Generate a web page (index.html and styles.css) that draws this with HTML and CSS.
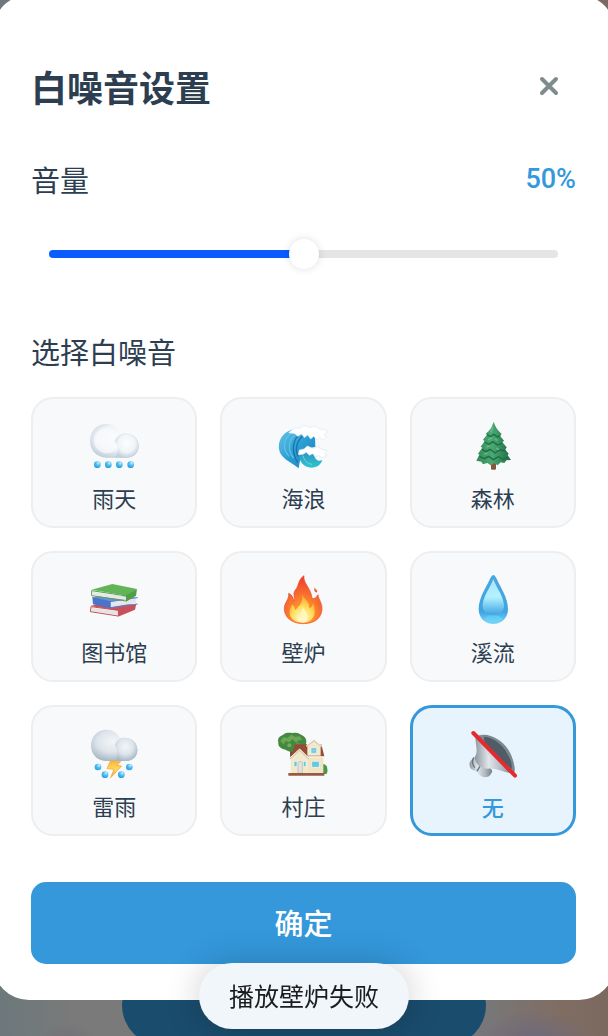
FILE: index.html
```html
<!DOCTYPE html>
<html lang="zh-CN">

<head>
    <meta charset="UTF-8">
    <meta name="viewport" content="width=device-width, initial-scale=1.0">
    <title>白噪音设置</title>
    <link rel="stylesheet" href="styles.css">
</head>

<body>
    <main class="dialog">
        <header class="dialog-header">
            <h1>白噪音设置</h1>
            <button class="close-btn" type="button" aria-label="关闭">
                <svg viewBox="0 0 20 20" fill="none" stroke="currentColor" stroke-width="4" stroke-linecap="round">
                    <path d="M3 3L17 17M17 3L3 17" />
                </svg>
            </button>
        </header>

        <div class="volume-header">
            <label for="volume">音量</label>
            <output class="volume-value" for="volume">50%</output>
        </div>
        <div class="volume-slider">
            <input type="range" id="volume" min="0" max="100" value="50">
        </div>

        <h2>选择白噪音</h2>
        <div class="noise-grid">
            <button class="noise-item" type="button">
                <svg viewBox="27 21 150 150">
                    <defs>
                        <radialGradient id="cloud" cx=".5" cy=".42" r=".58">
                            <stop offset="0" stop-color="#fcfdfe" />
                            <stop offset=".6" stop-color="#f1f5f8" />
                            <stop offset="1" stop-color="#c3d1de" />
                        </radialGradient>
                        <radialGradient id="bead" cx=".65" cy=".25" r=".75">
                            <stop offset="0" stop-color="#c6f1fc" />
                            <stop offset=".5" stop-color="#4fbdf0" />
                            <stop offset="1" stop-color="#2a9fe0" />
                        </radialGradient>
                    </defs>
                    <path fill="url(#cloud)" d="M78 131C51 131 30 109 30 81C30 52 51 30 78 30C99 30 116 41 123 59C151 51 176 69 176 96C176 117 161 131 140 131Z" />
                    <ellipse cx="80" cy="80" rx="38" ry="38" fill="#f8fafc" opacity=".7" />
                    <path fill="url(#cloud)" d="M104 82C110 66 123 58 138 58C161 58 176 75 176 96C176 117 161 131 140 131H106C118 115 116 93 104 82Z" />
                    <g fill="url(#bead)">
                        <circle cx="52" cy="152" r="10" />
                        <circle cx="85" cy="152" r="10" />
                        <circle cx="118" cy="152" r="10" />
                        <circle cx="152" cy="152" r="10" />
                    </g>
                </svg>
                <span>雨天</span>
            </button>

            <button class="noise-item" type="button">
                <svg viewBox="30 21 150 150">
                    <defs>
                        <linearGradient id="wave" x1="0" y1="0" x2="1" y2="1">
                            <stop offset="0" stop-color="#68c4e5" />
                            <stop offset=".5" stop-color="#2a9fd4" />
                            <stop offset="1" stop-color="#1b7db6" />
                        </linearGradient>
                        <linearGradient id="ripple" x1="0" y1="0" x2="0" y2="1">
                            <stop offset="0" stop-color="#2b8fc4" />
                            <stop offset="1" stop-color="#32c5ce" />
                        </linearGradient>
                    </defs>
                    <path fill="url(#wave)" d="M82 44C46 51 29 77 33 105C37 133 62 139 92 163C98 136 94 111 142 98L141 66L108 53Z" />
                    <path fill="none" stroke="#5fc0e2" stroke-width="4" d="M70 58C44 77 44 105 63 127M82 61C59 82 59 111 77 132" />
                    <path fill="none" stroke="#1b72ae" stroke-width="4" d="M91 64C70 87 73 119 89 146M103 67C82 87 82 112 91 128" />
                    <path fill="url(#ripple)" d="M92 119C94 144 107 159 130 161C148 161 159 151 163 138C147 147 137 129 139 116C119 105 103 107 92 119Z" />
                    <path fill="none" stroke="#6fd5e0" stroke-width="3" d="M105 125C108 140 118 149 132 151" />
                    <path fill="#fff" stroke="#dce9f0" stroke-width="2" d="M62 56L79 41L98 43L109 34L124 40L142 37L155 45L176 48L178 56L168 62L177 69L165 79L155 70L147 78L137 67L128 75L119 63L109 71L101 60L89 67L81 59Z" />
                    <path fill="#fff" stroke="#d2e9ef" stroke-width="2" d="M91 122L94 108L108 105L118 96L134 103L149 98L161 105L177 110L171 118L176 125L162 132L151 124L143 130L134 119L124 124L115 115L105 121Z" />
                </svg>
                <span>海浪</span>
            </button>

            <button class="noise-item" type="button">
                <svg viewBox="30 21 150 150">
                    <defs>
                        <linearGradient id="tree">
                            <stop offset="0" stop-color="#348a58" />
                            <stop offset=".45" stop-color="#4aa973" />
                            <stop offset="1" stop-color="#1d6c45" />
                        </linearGradient>
                    </defs>
                    <path fill="#86583d" d="M99 143H114V166Q106 169 99 166Z" />
                    <path fill="url(#tree)" d="M107 23C112 39 120 50 131 60L126 65L138 80L133 85L146 100L142 107L152 119L149 124L159 138L145 139L139 147L128 145L119 154L109 148L98 154L88 147L75 151L70 143L55 140L64 122L60 119L73 101L68 98L80 82L75 77L87 62L83 59C98 48 102 37 107 23Z" />
                    <path fill="none" stroke="#1f6b45" stroke-width="4" d="M87 62L98 68L107 61L119 69L127 64M79 84L93 91L104 83L119 93L134 87M72 106L84 113L96 106L111 117L124 108L143 111M64 127L79 134L92 127L106 137L121 128L135 136L149 130" />
                    <path fill="none" stroke="#63b982" stroke-width="5" d="M105 38L98 55M91 78L102 70M85 99L95 95M79 121L89 117M111 74L119 80M115 102L123 107" />
                </svg>
                <span>森林</span>
            </button>

            <button class="noise-item" type="button">
                <svg viewBox="27 18 150 150">
                    <path fill="#c4525a" d="M31 111L75 100L168 107L115 125Z" />
                    <path fill="#e6e3e3" d="M34 116L116 126V138L34 127Z" />
                    <path fill="none" stroke="#c4545c" stroke-width="3" stroke-linejoin="round" d="M116 124L33 113L31 128L114 141" />
                    <path fill="#c9505a" d="M114 123L169 104L165 122L114 143Z" />
                    <path fill="#6b91dc" d="M37 86L73 78L172 84L90 99Z" />
                    <path fill="#e3e6ef" d="M91 100L168 89V102L91 115Z" />
                    <path fill="none" stroke="#5a80cf" stroke-width="3" d="M89 98L173 86M89 117L173 105" />
                    <path fill="#4a74cc" d="M37 84L92 97V118L39 106Z" />
                    <path fill="#62b557" d="M35 62L97 45L171 60L140 80Z" />
                    <path fill="#e6e8e4" d="M38 69L139 83V93L40 80Z" />
                    <path fill="none" stroke="#58a04f" stroke-width="3" stroke-linejoin="round" d="M140 81L35 65V80L139 96" />
                    <path fill="#4f9f46" d="M138 79L171 60L168 80L138 98Z" />
                </svg>
                <span>图书馆</span>
            </button>

            <button class="noise-item" type="button">
                <svg viewBox="30 18 150 150">
                    <defs>
                        <radialGradient id="flame" cx=".5" cy=".85" r=".8">
                            <stop offset="0" stop-color="#ffb52e" />
                            <stop offset=".5" stop-color="#fa7a2c" />
                            <stop offset="1" stop-color="#ed3f30" />
                        </radialGradient>
                        <radialGradient id="glow" cx=".5" cy=".85" r=".8">
                            <stop offset="0" stop-color="#fffce0" />
                            <stop offset=".5" stop-color="#ffdf5e" />
                            <stop offset="1" stop-color="#fb9a30" />
                        </radialGradient>
                    </defs>
                    <path fill="url(#flame)" stroke="#ed4934" stroke-width="2" d="M108 20C104 42 130 58 132 88C143 91 145 83 150 77C151 92 166 104 161 128C156 151 136 164 105 164C71 164 48 144 49 118C49 100 64 93 62 73C72 77 76 86 77 96C84 85 72 76 82 63C93 51 90 31 108 20Z" />
                    <path fill="url(#glow)" d="M101 74C109 91 126 98 124 118C131 116 134 109 135 103C146 129 141 159 106 161C77 161 63 146 65 127C66 118 71 111 72 106C79 111 81 118 82 124C92 110 108 101 101 74Z" />
                    <path fill="#fff7be" d="M104 111C107 126 119 128 119 143C119 154 113 159 105 160C92 160 86 151 89 140C91 145 95 146 97 149C97 135 105 128 104 111Z" />
                    <path fill="#f26342" d="M140 54C140 61 151 62 147 70Q141 71 139 65Q138 61 140 54Z" />
                </svg>
                <span>壁炉</span>
            </button>

            <button class="noise-item" type="button">
                <svg viewBox="30 18 150 150">
                    <defs>
                        <linearGradient id="drop" x1="0" y1="0" x2="0" y2="1">
                            <stop offset="0" stop-color="#4aa6df" />
                            <stop offset=".75" stop-color="#3fa5e2" />
                            <stop offset="1" stop-color="#76d9fa" />
                        </linearGradient>
                        <linearGradient id="shine" x1="0" y1="0" x2="0" y2="1">
                            <stop offset="0" stop-color="#a9e2f7" />
                            <stop offset=".5" stop-color="#b5f2ff" />
                            <stop offset="1" stop-color="#3fa5e2" />
                        </linearGradient>
                    </defs>
                    <path fill="url(#drop)" d="M106 18C111 18 114 26 118 34C128 56 150 88 150 120C150 146 132 165 106 165C80 165 62 146 62 120C62 88 84 56 94 34C98 26 101 18 106 18Z" />
                    <path fill="url(#shine)" d="M106 30C112 51 138 83 138 110C138 127 126 137 106 137C86 137 74 127 74 110C74 83 100 51 106 30Z" />
                    <ellipse cx="106" cy="150" rx="28" ry="11" fill="#73d6fa" opacity=".5" />
                </svg>
                <span>溪流</span>
            </button>

            <button class="noise-item" type="button">
                <svg viewBox="27 21 150 150">
                    <defs>
                        <radialGradient id="storm" cx=".47" cy=".38" r=".62">
                            <stop offset="0" stop-color="#f1f5f8" />
                            <stop offset=".55" stop-color="#dde5eb" />
                            <stop offset="1" stop-color="#a9b8c5" />
                        </radialGradient>
                        <linearGradient id="bolt" x1="0" y1="0" x2="0" y2="1">
                            <stop offset="0" stop-color="#ffb52f" />
                            <stop offset=".5" stop-color="#ffda62" />
                            <stop offset="1" stop-color="#f39b27" />
                        </linearGradient>
                    </defs>
                    <path fill="url(#storm)" d="M79 117C52 117 33 98 33 70C33 43 53 23 79 23C98 23 113 33 120 49C148 42 172 59 172 84C172 104 157 117 137 117Z" />
                    <path fill="url(#storm)" d="M105 70C109 55 121 47 135 47C157 47 172 63 172 84C172 104 157 117 137 117H105C116 102 114 82 105 70Z" />
                    <g fill="url(#bead)">
                        <circle cx="54" cy="135" r="10" />
                        <circle cx="148" cy="135" r="10" />
                        <circle cx="75" cy="158" r="10" />
                        <circle cx="124" cy="158" r="10" />
                    </g>
                    <path fill="url(#bolt)" stroke="#eda132" stroke-width="2" d="M91 117L122 119L111 130L125 132L92 167L102 142L81 140Z" />
                </svg>
                <span>雷雨</span>
            </button>

            <button class="noise-item" type="button">
                <svg viewBox="30 21 150 150">
                    <path fill="#77523b" d="M66 83H79V111H66Z" />
                    <path fill="#46883f" d="M31 61C27 48 38 41 45 39C54 29 68 34 75 33C88 29 98 37 106 42C119 50 116 67 109 75C101 88 89 83 82 87C70 94 61 86 52 83C40 81 29 73 31 61Z" />
                    <path fill="#6aa856" d="M37 57L47 45L58 48L70 38L82 45L95 43L103 55L93 54L85 62L73 52L64 61L53 57L47 67Z" />
                    <circle cx="64" cy="70" r="6" fill="#73ae5f" />
                    <circle cx="90" cy="69" r="6" fill="#62a052" />
                    <path fill="#4c9748" d="M157 156V132Q166 119 176 133Q181 146 176 156Z" />
                    <path fill="#efe5c6" d="M68 101H166V154H68Z" />
                    <path fill="#934d35" d="M81 67H160L169 103H69Z" />
                    <path fill="#f2e8cb" d="M118 71L138 54L158 72V101H118ZM69 108L95 84L120 109V154H69Z" />
                    <path fill="none" stroke="#d3c8b5" stroke-width="5" stroke-linejoin="round" d="M115 73L138 55L161 74M66 110L95 84L123 111" />
                    <path fill="none" stroke="#fff8e8" stroke-width="3" d="M116 70L138 52L160 71M67 107L95 81L122 108M123 105H167" />
                    <path fill="#65c7e2" stroke="#fff9e7" stroke-width="2" d="M129 77H146V94H129ZM131 118H154V136H131ZM78 118H87V134H78ZM106 118H114V134H106Z" />
                    <path fill="#dce5e4" stroke="#b7b8af" stroke-width="2" d="M90 121Q96 115 103 121V153H90Z" />
                    <path stroke="#9bd9e8" stroke-width="2" d="M138 77V94M129 85H146" />
                    <path fill="#985a43" d="M61 153H169V161H61Z" />
                </svg>
                <span>村庄</span>
            </button>

            <button class="noise-item selected" type="button" aria-pressed="true">
                <svg viewBox="30 27 150 150">
                    <defs>
                        <linearGradient id="metal">
                            <stop offset="0" stop-color="#8d979f" />
                            <stop offset=".35" stop-color="#e1e6ea" />
                            <stop offset=".7" stop-color="#aeb6bc" />
                            <stop offset="1" stop-color="#747e86" />
                        </linearGradient>
                    </defs>
                    <path fill="url(#metal)" d="M49 107L37 120Q31 133 39 143Q49 150 57 151Q65 171 86 168Q98 167 103 150L88 126Z" />
                    <path fill="none" stroke="#65717a" stroke-width="4" d="M47 110Q39 125 50 140M57 151L66 135" />
                    <path fill="url(#metal)" d="M53 45C50 72 63 87 50 109C52 131 69 144 91 143C113 139 134 155 168 158C174 140 167 117 149 91C126 57 76 32 53 45Z" />
                    <path fill="#7d8890" d="M65 44C90 34 131 56 150 85C165 108 171 135 168 153C148 146 122 122 101 100C78 77 62 55 65 44Z" />
                    <path fill="#515d66" d="M80 47C105 49 134 70 148 98C159 117 163 133 161 144C141 130 113 104 99 88C86 73 72 55 80 47Z" />
                    <ellipse cx="97" cy="96" rx="14" ry="7" transform="rotate(45 97 96)" fill="#d3d9dd" />
                    <path stroke="#e6282f" stroke-width="12" stroke-linecap="round" d="M46 36L171 164" />
                </svg>
                <span>无</span>
            </button>
        </div>

        <button class="confirm-btn" type="button">确定</button>
    </main>

    <div class="page-action"></div>

    <div class="toast" role="status">播放壁炉失败</div>
</body>

</html>
```

FILE: styles.css
```css
* {
    box-sizing: border-box;
}

body {
    margin: 0;
    min-height: 100vh;
    overflow: hidden;
    font-family: "Noto Sans CJK SC", "Noto Sans", sans-serif;
    color: #2c3e50;
    background:
        radial-gradient(ellipse 30px 24px at 11% 100%, #716d79, transparent),
        radial-gradient(ellipse 60px 36px at 88% 100%, #716a79 30%, transparent),
        linear-gradient(90deg, #6c787b, #797a79 12%, #777779 80%, #806d62 92%, #7b6961);
}

h1,
h2 {
    margin: 0;
}

button {
    font-family: inherit;
    color: inherit;
    cursor: pointer;
}

/* the sheet is a little wider than the screen */
.dialog {
    position: relative;
    z-index: 1;
    margin: -5px -7px 0;
    padding: 65px 39px 36px 38px;
    border-radius: 36px;
    background: #fff;
}

.dialog-header,
.volume-header {
    display: flex;
    align-items: center;
    justify-content: space-between;
}

.dialog-header {
    margin-bottom: 46px;
}

h1 {
    font-size: 36px;
    line-height: 50px;
    font-weight: 700;
}

.close-btn {
    display: flex;
    align-items: center;
    justify-content: center;
    width: 54px;
    height: 52px;
    padding: 0;
    border: none;
    background: none;
    color: #7f8c8d;
}

.close-btn svg {
    width: 20px;
    height: 20px;
}

.volume-header,
h2 {
    font-size: 29px;
    line-height: 42px;
    font-weight: 400;
}

.volume-value {
    font-family: Roboto, sans-serif;
    font-size: 27px;
    font-weight: 500;
    color: #3498db;
}

.volume-slider {
    padding: 39px 18px 61px;
}

.volume-slider input {
    display: block;
    width: 100%;
    height: 30px;
    margin: 0;
    background: none;
    appearance: none;
}

.volume-slider input::-webkit-slider-runnable-track {
    height: 8px;
    border-radius: 4px;
    background: linear-gradient(90deg, #0a5cff 50%, #e5e5e5 50%);
}

.volume-slider input::-webkit-slider-thumb {
    width: 30px;
    height: 30px;
    margin-top: -11px;
    border-radius: 50%;
    background: #fff;
    box-shadow: 0 0 8px rgba(0, 0, 0, 0.13);
    appearance: none;
}

.noise-grid {
    display: grid;
    grid-template-columns: repeat(3, 1fr);
    grid-auto-rows: 131px;
    gap: 23px;
    margin-top: 25px;
}

.noise-item {
    display: flex;
    flex-direction: column;
    align-items: center;
    justify-content: flex-start;
    gap: 11px;
    padding: 22px 0 0;
    border: 2px solid #eceef0;
    border-radius: 22px;
    background: #f8f9fb;
    font-size: 22px;
    line-height: 30px;
}

.noise-item svg {
    flex: none;
    width: 50px;
    height: 50px;
}

.noise-item.selected {
    border: 3px solid #3498db;
    background: #e8f4fd;
    color: #3498db;
    font-weight: 500;
}

.confirm-btn {
    display: block;
    width: 100%;
    height: 82px;
    margin-top: 46px;
    padding: 0 0 2px;
    border: none;
    border-radius: 15px;
    background: #3498db;
    color: #fff;
    font-size: 29px;
    font-weight: 500;
}

/* button of the page under the dialog */
.page-action {
    width: 60%;
    height: 82px;
    margin: -36px auto 0;
    border-radius: 41px;
    background: #1a4c6d;
}

.toast {
    position: fixed;
    z-index: 2;
    bottom: 7px;
    left: 50%;
    transform: translateX(-50%);
    padding: 11px 30px 13px;
    border-radius: 33px;
    background: #f1f6fa;
    box-shadow: 0 0 36px rgba(0, 0, 0, 0.2);
    color: #1b1c1d;
    font-size: 25px;
    line-height: 42px;
    white-space: nowrap;
}
```
